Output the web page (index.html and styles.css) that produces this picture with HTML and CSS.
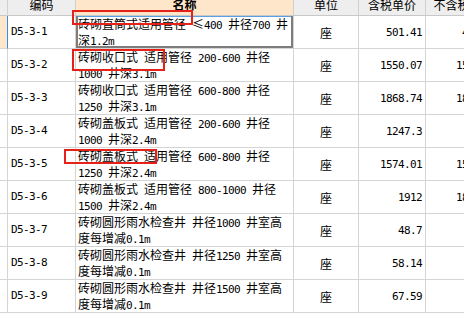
FILE: index.html
```html
<!DOCTYPE html>
<html lang="zh">
<head>
<meta charset="utf-8">
<link rel="stylesheet" href="styles.css">
</head>
<body>
<div class="sheet">
  <div class="grid">
    <div class="h ind"></div><div class="h">编码</div><div class="h hsel">名称</div><div class="h">单位</div><div class="h">含税单价</div><div class="h">不含税单价</div>

    <div class="c ind cur"></div><div class="c code">D5-3-1</div><div class="c name sel"><div class="t">砖砌直筒式适用管径<span class="a"> </span><span class="le">≤</span><span class="a">400 </span>井径<span class="a">700 </span>井<br>深<span class="a">1.2m</span></div></div><div class="c unit">座</div><div class="c num">501.41</div><div class="c num">446.95</div>

    <div class="c ind"></div><div class="c code">D5-3-2</div><div class="c name"><div class="t">砖砌收口式<span class="a"> </span>适用管径<span class="a"> 200-600 </span>井径<br><span class="a">1000 </span>井深<span class="a">3.1m</span></div></div><div class="c unit">座</div><div class="c num">1550.07</div><div class="c num">1520.31</div>

    <div class="c ind"></div><div class="c code">D5-3-3</div><div class="c name"><div class="t">砖砌收口式<span class="a"> </span>适用管径<span class="a"> 600-800 </span>井径<br><span class="a">1250 </span>井深<span class="a">3.1m</span></div></div><div class="c unit">座</div><div class="c num">1868.74</div><div class="c num">1832.56</div>

    <div class="c ind"></div><div class="c code">D5-3-4</div><div class="c name"><div class="t">砖砌盖板式<span class="a"> </span>适用管径<span class="a"> 200-600 </span>井径<br><span class="a">1000 </span>井深<span class="a">2.4m</span></div></div><div class="c unit">座</div><div class="c num">1247.3</div><div class="c num">1223</div>

    <div class="c ind"></div><div class="c code">D5-3-5</div><div class="c name"><div class="t">砖砌盖板式<span class="a"> </span>适用管径<span class="a"> 600-800 </span>井径<br><span class="a">1250 </span>井深<span class="a">2.4m</span></div></div><div class="c unit">座</div><div class="c num">1574.01</div><div class="c num">1543.52</div>

    <div class="c ind"></div><div class="c code">D5-3-6</div><div class="c name"><div class="t">砖砌盖板式<span class="a"> </span>适用管径<span class="a"> 800-1000 </span>井径<br><span class="a">1500 </span>井深<span class="a">2.4m</span></div></div><div class="c unit">座</div><div class="c num">1912</div><div class="c num">1874.88</div>

    <div class="c ind"></div><div class="c code">D5-3-7</div><div class="c name"><div class="t">砖砌圆形雨水检查井<span class="a"> </span>井径<span class="a">1000 </span>井室高<br>度每增减<span class="a">0.1m</span></div></div><div class="c unit">座</div><div class="c num">48.7</div><div class="c num">47.76</div>

    <div class="c ind"></div><div class="c code">D5-3-8</div><div class="c name"><div class="t">砖砌圆形雨水检查井<span class="a"> </span>井径<span class="a">1250 </span>井室高<br>度每增减<span class="a">0.1m</span></div></div><div class="c unit">座</div><div class="c num">58.14</div><div class="c num">57.01</div>

    <div class="c ind"></div><div class="c code">D5-3-9</div><div class="c name"><div class="t">砖砌圆形雨水检查井<span class="a"> </span>井径<span class="a">1500 </span>井室高<br>度每增减<span class="a">0.1m</span></div></div><div class="c unit">座</div><div class="c num">67.59</div><div class="c num">66.28</div>
  </div>

  <div class="mark m1"></div>
  <div class="mark m2"></div>
  <div class="mark m3"></div>
</div>
</body>
</html>
```

FILE: styles.css
```css
html, body {
  margin: 0;
  padding: 0;
  background: #ffffff;
  overflow: hidden;
}

.sheet {
  position: relative;
  width: 464px;
  height: 317px;
  overflow: hidden;
  font-family: "Noto Sans CJK SC", sans-serif;
  font-size: 12px;
  color: #000;
}

.grid {
  display: grid;
  grid-template-columns: 8px 68px 218px 65px 67px 76px;
  grid-template-rows: 16px repeat(9, 33px);
  width: 502px;
}

.h, .c {
  box-sizing: border-box;
  border-right: 1px solid #d4d4d4;
  border-bottom: 1px solid #d4d4d4;
  overflow: hidden;
  white-space: pre;
}

.h {
  background: #eeeeee;
  display: flex;
  justify-content: center;
  align-items: flex-start;
  line-height: 9px;
  border-right-color: #d0d0d0;
  border-bottom-color: #c8c8c8;
}

.h.hsel {
  background: #fde6c9;
  font-weight: bold;
}

.c {
  display: flex;
  align-items: center;
  line-height: 14px;
  background: #ffffff;
}

.c.ind.cur {
  background: #fde6c9;
  border-right: 1px solid #3a8ee6;
}

.code {
  font-family: "DejaVu Sans Mono", monospace;
  font-size: 11px;
  letter-spacing: -0.62px;
  padding-left: 3px;
}

.name {
  padding-left: 2px;
  padding-top: 1px;
}

.t {
  white-space: pre;
}

.name.sel {
  box-shadow: inset 2px 0 0 #7d7d7d, inset -2px 0 0 #7d7d7d, inset 0 -2px 0 #7d7d7d, inset 0 1px 0 #5b9fe0;
}

.a {
  font-family: "DejaVu Sans Mono", monospace;
  font-size: 11px;
  letter-spacing: -0.62px;
}

.le {
  display: inline-block;
  width: 12px;
  text-align: center;
}

.unit {
  justify-content: center;
  padding-top: 2px;
}

.num {
  justify-content: flex-end;
  padding-right: 3px;
  padding-top: 1px;
  font-family: "DejaVu Sans Mono", monospace;
  font-size: 11px;
  letter-spacing: -0.62px;
}

.mark {
  position: absolute;
  box-sizing: border-box;
  border: 2px solid #e62117;
}

.m1 { left: 72px; top: 10px; width: 121px; height: 15px; }
.m2 { left: 72px; top: 49px; width: 93px; height: 22px; }
.m3 { left: 64px; top: 149px; width: 93px; height: 15px; }
```
